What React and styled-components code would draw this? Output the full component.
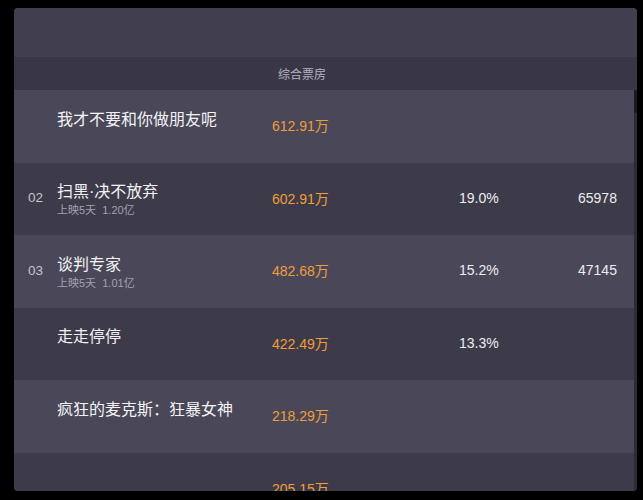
import React from 'react';
import styled, { createGlobalStyle } from 'styled-components';

const rows = [
  { rank: '', title: '我才不要和你做朋友呢', sub: '', box: '612.91万', rate: '', seats: '' },
  { rank: '02', title: '扫黑·决不放弃', sub: '上映5天  1.20亿', box: '602.91万', rate: '19.0%', seats: '65978' },
  { rank: '03', title: '谈判专家', sub: '上映5天  1.01亿', box: '482.68万', rate: '15.2%', seats: '47145' },
  { rank: '', title: '走走停停', sub: '', box: '422.49万', rate: '13.3%', seats: '' },
  { rank: '', title: '疯狂的麦克斯：狂暴女神', sub: '', box: '218.29万', rate: '', seats: '' },
  { rank: '', title: '', sub: '', box: '205.15万', rate: '', seats: '' },
];

const GlobalStyle = createGlobalStyle`
  html, body {
    margin: 0;
    background: #000;
  }
  body {
    padding: 8px 6px 0 14px;
    font-family: "Liberation Sans", "Noto Sans CJK SC", sans-serif;
  }
`;

function App() {
  return (
    <>
      <GlobalStyle />
      <Panel>
        <TopBar />
        <HeadRow>
          <span />
          <span />
          <HeadLabel>综合票房</HeadLabel>
        </HeadRow>
        <Body>
          <List>
            {rows.map((r, i) => (
              <Row key={i} light={i % 2 === 0}>
                <Rank>{r.rank}</Rank>
                <TitleCell>
                  <Title>{r.title}</Title>
                  <Sub>{r.sub}</Sub>
                </TitleCell>
                <Box>{r.box}</Box>
                <Value>{r.rate}</Value>
                <Value>{r.seats}</Value>
              </Row>
            ))}
          </List>
          <ScrollTrack>
            <Thumb />
          </ScrollTrack>
        </Body>
      </Panel>
    </>
  );
}

export default App;

const Panel = styled.div`
  width: 623px;
  height: 483px;
  border-radius: 4px;
  overflow: hidden;
  background: #3c3a48;
  display: flex;
  flex-direction: column;
`;

const TopBar = styled.div`
  height: 49px;
  flex: none;
  background: #413f4f;
`;

const cols = '43px 215px 187px 119px 1fr';

const HeadRow = styled.div`
  height: 33px;
  flex: none;
  display: grid;
  grid-template-columns: ${cols};
  align-items: center;
  background: #393746;
  padding-right: 3px;
`;

const HeadLabel = styled.span`
  padding-left: 6px;
  font-size: 12px;
  color: #b4b2c0;
`;

const Body = styled.div`
  flex: 1;
  display: flex;
  min-height: 0;
`;

const List = styled.div`
  flex: 1;
  display: flex;
  flex-direction: column;
`;

const Row = styled.div`
  height: 72.5px;
  flex: none;
  display: grid;
  grid-template-columns: ${cols};
  align-items: center;
  background: ${p => (p.light ? '#4a4858' : '#3d3b4a')};
`;

const Rank = styled.span`
  text-align: center;
  font-size: 13.5px;
  color: #c4c3ce;
  transform: translateY(-1px);
`;

const TitleCell = styled.div`
  display: flex;
  flex-direction: column;
  gap: 1px;
  transform: translateY(1px);
`;

const Title = styled.span`
  font-size: 16px;
  line-height: 20px;
  color: #f2f2f5;
  white-space: nowrap;
`;

const Sub = styled.span`
  font-size: 11px;
  line-height: 14px;
  height: 14px;
  color: #a3a1b0;
  white-space: pre;
`;

const Box = styled.span`
  font-size: 14px;
  color: #f19c3a;
  transform: translateY(-1px);
`;

const Value = styled.span`
  font-size: 14px;
  color: #ececf0;
  transform: translateY(-1px);
`;

const ScrollTrack = styled.div`
  width: 3px;
  flex: none;
  background: #2d2b37;
`;

const Thumb = styled.div`
  height: 23px;
  background: #1c1b22;
`;
